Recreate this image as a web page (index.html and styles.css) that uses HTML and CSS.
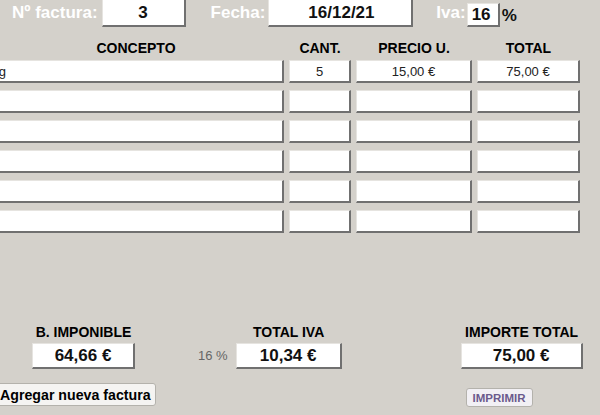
FILE: index.html
```html
<!DOCTYPE html>
<html lang="es">
<head>
    <meta charset="UTF-8">
    <title>Factura</title>
    <link rel="stylesheet" href="styles.css">
</head>
<body>
    <div class="topbar">
        <label class="top-label lbl-num" for="num">Nº factura:</label>
        <input class="box top-box box-num" id="num" value="3" readonly>
        <label class="top-label lbl-fecha" for="fecha">Fecha:</label>
        <input class="box top-box box-fecha" id="fecha" value="16/12/21" readonly>
        <label class="top-label lbl-iva" for="iva">Iva:</label>
        <input class="box top-box box-iva" id="iva" value="16" readonly>
        <span class="pct">%</span>
    </div>

    <div class="lines">
        <div class="heads">
            <div class="head head-concepto">CONCEPTO</div>
            <div class="head">CANT.</div>
            <div class="head">PRECIO U.</div>
            <div class="head">TOTAL</div>
        </div>
        <div class="rows" id="rows"></div>
    </div>

    <div class="totals">
        <div class="total-group group-base">
            <div class="total-label">B. IMPONIBLE</div>
            <input class="box total-box" value="64,66 €" readonly>
        </div>
        <span class="iva-rate">16 %</span>
        <div class="total-group group-iva">
            <div class="total-label">TOTAL IVA</div>
            <input class="box total-box" value="10,34 €" readonly>
        </div>
        <div class="total-group group-importe">
            <div class="total-label">IMPORTE TOTAL</div>
            <input class="box total-box" value="75,00 €" readonly>
        </div>
    </div>

    <div class="actions">
        <button class="btn btn-nueva">Agregar nueva factura</button>
        <button class="btn btn-imprimir">IMPRIMIR</button>
    </div>

    <script>
        // lineas de la factura
        const lineas = [
            { concepto: 'Hosting', cant: '5', precio: '15,00 €', total: '75,00 €' },
            {}, {}, {}, {}, {}
        ];

        const rows = document.getElementById('rows');
        lineas.forEach(l => {
            const campos = [
                ['cell-concepto', l.concepto],
                ['cell-cant', l.cant],
                ['cell-precio', l.precio],
                ['cell-total', l.total]
            ];
            campos.forEach(([clase, valor]) => {
                const input = document.createElement('input');
                input.className = 'box cell ' + clase;
                input.value = valor || '';
                rows.appendChild(input);
            });
        });
    </script>
</body>
</html>
```

FILE: styles.css
```css
* {
    box-sizing: border-box;
}
body {
    margin: 0;
    width: 600px;
    height: 415px;
    overflow: hidden;
    background-color: #d4d1cb;
    font-family: "Liberation Sans", Arial, sans-serif;
    color: #111;
}
.box {
    display: block;
    margin: 0;
    background-color: #fff;
    border: none;
    border-top: 1px solid #e6e4e0;
    border-left: 1px solid #e6e4e0;
    border-right: 2px solid #707070;
    border-bottom: 2px solid #707070;
    font-family: "Liberation Sans", Arial, sans-serif;
    color: #111;
    text-align: center;
    outline: none;
    padding: 0;
}

/* cabecera */
.topbar {
    display: flex;
    align-items: center;
    height: 28px;
    margin-top: -1px;
}
.top-label {
    color: #fff;
    font-size: 17px;
    font-weight: bold;
}
.lbl-num {
    margin-left: 12px;
}
.top-box {
    height: 28px;
    font-size: 17px;
    font-weight: bold;
}
.box-num {
    width: 84px;
    margin-left: 4px;
}
.lbl-fecha {
    margin-left: 25px;
}
.box-fecha {
    width: 145px;
    margin-left: 3px;
    text-align: left;
    padding-left: 39px;
}
.lbl-iva {
    margin-left: 23px;
}
.box-iva {
    width: 33px;
    height: 24px;
    margin-top: 4px;
    margin-left: 1px;
    text-align: left;
    padding-left: 4px;
}
.pct {
    font-size: 17px;
    font-weight: bold;
    margin-left: 2px;
    margin-top: 6px;
}

/* lineas */
.lines {
    margin-left: -43px;
}
.heads,
.rows {
    display: grid;
    grid-template-columns: 327px 62px 116px 103px;
    column-gap: 5px;
}
.heads {
    margin-top: 13px;
    height: 16px;
}
.head {
    font-size: 14px;
    font-weight: bold;
    line-height: 16px;
    text-align: center;
    color: #000;
}
.head-concepto {
    padding-left: 31px;
}
.rows {
    margin-top: 4px;
    row-gap: 7px;
}
.cell {
    height: 23px;
    font-size: 13px;
    color: #222;
}
.cell-concepto {
    text-align: left;
    padding-left: 4px;
}

/* totales */
.totals {
    display: flex;
    align-items: flex-end;
    margin-top: 91px;
}
.total-group {
    display: flex;
    flex-direction: column;
    align-items: center;
}
.total-label {
    font-size: 14px;
    font-weight: bold;
    line-height: 16px;
    color: #000;
    margin-bottom: 3px;
}
.total-box {
    height: 26px;
    font-size: 17px;
    font-weight: bold;
}
.group-base {
    margin-left: 32px;
}
.group-base .total-box {
    width: 103px;
}
.iva-rate {
    font-size: 13px;
    color: #666;
    margin-left: 63px;
    margin-bottom: 6px;
}
.group-iva {
    margin-left: 8px;
}
.group-iva .total-box {
    width: 106px;
}
.group-importe {
    margin-left: 119px;
}
.group-importe .total-box {
    width: 122px;
}

/* botones */
.actions {
    display: flex;
    align-items: flex-start;
    margin-top: 14px;
}
.btn {
    font-family: "Liberation Sans", Arial, sans-serif;
    font-weight: bold;
    background-color: #f5f4f2;
    border: 1px solid #b4b2ac;
    border-radius: 3px;
    cursor: pointer;
}
.btn-nueva {
    margin-left: -6px;
    height: 23px;
    padding: 0 4px 0 5px;
    font-size: 14.2px;
    color: #000;
}
.btn-imprimir {
    margin-left: 310px;
    margin-top: 5px;
    width: 67px;
    height: 19px;
    padding: 0;
    font-size: 11.5px;
    color: #6b5a8c;
    background-color: #f2f0f4;
}
```
